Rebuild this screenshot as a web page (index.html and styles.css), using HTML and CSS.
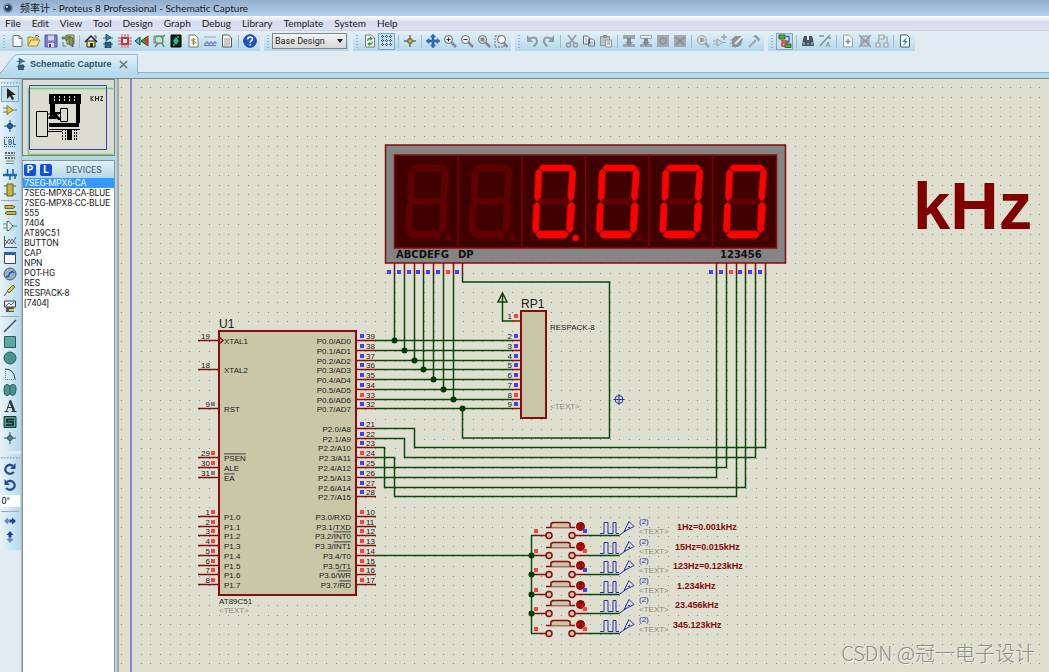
FILE: index.html
```html
<!DOCTYPE html>
<html lang="zh-CN">
<head>
    <meta charset="UTF-8">
    <meta name="viewport" content="width=device-width, initial-scale=1.0">
    <title>频率计 - Proteus 8 Professional - Schematic Capture</title>
    <link rel="stylesheet" href="styles.css">
</head>
<body>
    <!-- icon symbols -->
    <svg class="symbols" aria-hidden="true">
        <symbol id="i-new" viewBox="0 0 14 14"><path d="M3 1.5h6l3 3v8H3z" fill="#fff" stroke="#777"/><path d="M9 1.5v3h3" fill="none" stroke="#777"/></symbol>
        <symbol id="i-open" viewBox="0 0 14 14"><path d="M1 12V3h4l1 1h5v2" fill="#f5d36b" stroke="#a98a2a"/><path d="M1 12l3-6h9l-3 6z" fill="#fbe48f" stroke="#a98a2a"/><path d="M8 2q3-2 4 1" fill="none" stroke="#444"/></symbol>
        <symbol id="i-save" viewBox="0 0 14 14"><path d="M1 1h12v12H1z" fill="#7a7acb" stroke="#5656a0"/><path d="M4 1.500h6v5H4z" fill="#cfd2f2"/><path d="M4 9h6v4H4z" fill="#dfe0ee"/><path d="M5 10h2v3H5z" fill="#445"/></symbol>
        <symbol id="i-exit" viewBox="0 0 14 14"><path d="M6 1h7v9H6z" fill="#d9dd90" stroke="#6b6b2c"/><path d="M8 2l4 2v9l-4-3z" fill="#8f9450" stroke="#555"/><path d="M1 3h4V1l3 3-3 3V5H1z" fill="#7c9a40" stroke="#4b5b22" stroke-width=".6"/><path d="M2 8v4h3" fill="none" stroke="#777"/></symbol>
        <symbol id="i-home" viewBox="0 0 14 14"><path d="M3 7h8v6H3z" fill="#ffe84a" stroke="#222"/><path d="M1 8l6-6 6 6" fill="none" stroke="#222" stroke-width="1.500"/><path d="M10 2h2v3" fill="none" stroke="#a33"/><path d="M6 9h3v4H6z" fill="#222"/></symbol>
        <symbol id="i-sch" viewBox="0 0 14 14"><path d="M2 4h10M2 10h10" stroke="#456"/><path d="M5 0l5 3.500L5 7z" fill="#2a8cc8" stroke="#123" stroke-width=".7"/><path d="M4 8h2.500v6H4zM7.500 8H10v6H7.500z" fill="#23628c" stroke="#123" stroke-width=".5"/></symbol>
        <symbol id="i-pcb" viewBox="0 0 14 14"><path d="M4 0v14M7 0v14M10 0v14M0 4h14M0 7h14M0 10h14" stroke="#d8505a"/><path d="M3 3h8v8H3z" fill="#d32f39"/><path d="M5 5h4v4H5z" fill="#fff"/></symbol>
        <symbol id="i-3d" viewBox="0 0 14 14"><path d="M6 7l7-5v10z" fill="#2ba02b" stroke="#175c17"/><path d="M10 5l3-3v10l-3-3z" fill="#d33"/><path d="M0 7l5-4v8z" fill="#4cc3b4" stroke="#234"/></symbol>
        <symbol id="i-gerber" viewBox="0 0 14 14"><path d="M2 2h9v7H2z" fill="#cfe3d4" stroke="#5c8a6c"/><circle cx="7" cy="6" r="4" fill="none" stroke="#5c8a6c"/><path d="M3 13l3-4M10 9l2 4M9 4l4-3" stroke="#5c8a6c" stroke-width="1.500"/></symbol>
        <symbol id="i-design" viewBox="0 0 14 14"><path d="M2 1h10v12H2z" fill="#132018" stroke="#000"/><path d="M7 3l3 4-3 4-3-4z" fill="#19c49a"/><path d="M8 3h2M4 11h2" stroke="#7fe07f"/></symbol>
        <symbol id="i-bom" viewBox="0 0 14 14"><path d="M3 1h6l3 3v9H3z" fill="#fffdf0" stroke="#777"/><path d="M9.500 5.500q-4-1.500-4 .5 0 1 2 1.200t2 1.300q0 2-4 .5M7.500 4v7" fill="none" stroke="#a8882c"/></symbol>
        <symbol id="i-wave" viewBox="0 0 14 14"><path d="M1 3h12" stroke="#b9c4d6" stroke-width="2"/><path d="M1 10h2V8h2v2h2V8h2v2h2V8h2v2M1 11.500h12" fill="none" stroke="#6a6fc8"/></symbol>
        <symbol id="i-doc" viewBox="0 0 14 14"><path d="M2.500 1h6l3 3v9h-9z" fill="#fff" stroke="#555"/><path d="M4 5h6M4 7h6M4 9h6M4 11h6" stroke="#777" stroke-width=".8"/></symbol>
        <symbol id="i-help" viewBox="0 0 14 14"><circle cx="7" cy="7" r="6.300" fill="#2456c4" stroke="#163a8e"/><path d="M4.700 5.400q.1-2.300 2.400-2.300t2.300 2q0 1.200-1.300 1.900-1 .5-1 1.700M7.100 10v1.600" fill="none" stroke="#fff" stroke-width="1.500"/></symbol>
        <symbol id="i-refresh" viewBox="0 0 14 14"><path d="M2.500 1h6l3 3v9h-9z" fill="#fff" stroke="#777"/><path d="M4.500 7q0-3 4-2.500M9.500 7.500q0 3-4 2.500M7 3l2 1.500L7 6M7 8.500L5 10l2 1.500" fill="none" stroke="#2f9e2f" stroke-width="1.200"/></symbol>
        <symbol id="i-grid" viewBox="0 0 14 14"><path d="M1 2.500h12M1 6.500h12M1 10.500h12M2.500 1v12M6.500 1v12M10.500 1v12" stroke="#3f4f63" stroke-dasharray="1 1"/></symbol>
        <symbol id="i-origin" viewBox="0 0 14 14"><path d="M7 1v12M1 7h12" stroke="#333"/><path d="M5 5h4v4H5z" fill="#d4c22c" stroke="#675f14"/></symbol>
        <symbol id="i-pan" viewBox="0 0 14 14"><path d="M7 0l2.500 3H8v3h3V4.500L14 7l-3 2.500V8H8v3h1.500L7 14l-2.500-3H6V8H3v1.500L0 7l3-2.500V6h3V3H4.500z" fill="#2f6cc4" stroke="#1d4a90" stroke-width=".5"/></symbol>
        <symbol id="i-zin" viewBox="0 0 14 14"><path d="M8.500 8.500l4.500 4.500" stroke="#888" stroke-width="2.500"/><circle cx="5.500" cy="5.500" r="4" fill="#eef3f6" stroke="#666"/><path d="M3.500 5.500h4M5.500 3.500v4" stroke="#333"/></symbol>
        <symbol id="i-zout" viewBox="0 0 14 14"><path d="M8.500 8.500l4.500 4.500" stroke="#888" stroke-width="2.500"/><circle cx="5.500" cy="5.500" r="4" fill="#eef3f6" stroke="#666"/><path d="M3.500 5.500h4" stroke="#333"/></symbol>
        <symbol id="i-zall" viewBox="0 0 14 14"><path d="M8.500 8.500l4.500 4.500" stroke="#888" stroke-width="2.500"/><circle cx="5.500" cy="5.500" r="4" fill="#eef3f6" stroke="#666"/><path d="M3.500 3.500h4v4h-4z" fill="#888"/></symbol>
        <symbol id="i-zarea" viewBox="0 0 14 14"><path d="M1 2h9v11H1z" fill="none" stroke="#777" stroke-dasharray="2 1"/><path d="M10 9l3.500 4" stroke="#888" stroke-width="2.500"/><circle cx="7.500" cy="5.500" r="4" fill="#f4f8fb" stroke="#666"/></symbol>
        <symbol id="i-undo" viewBox="0 0 14 14"><path d="M4 5q8-4 8 2.500 0 2-3.500 5" fill="none" stroke="#8f9ba5" stroke-width="2"/><path d="M2 1v7h6z" fill="#8f9ba5"/></symbol>
        <symbol id="i-redo" viewBox="0 0 14 14"><path d="M10 5Q2 1 2 7.500q0 2 3.500 5" fill="none" stroke="#8f9ba5" stroke-width="2"/><path d="M12 1v7H6z" fill="#8f9ba5"/></symbol>
        <symbol id="i-cut" viewBox="0 0 14 14"><path d="M3 1l6.500 8.500M11 1L4.500 9.500" stroke="#909aa2" stroke-width="1.600"/><circle cx="3.500" cy="11" r="2" fill="none" stroke="#909aa2" stroke-width="1.500"/><circle cx="10.500" cy="11" r="2" fill="none" stroke="#909aa2" stroke-width="1.500"/></symbol>
        <symbol id="i-copy" viewBox="0 0 14 14"><path d="M1.500 2h4l2 2v6h-6zM6.500 5h4l2 2v5h-6z" fill="#fff" stroke="#5a6880"/><path d="M3 5h2M3 7h2M8 8h3M8 10h3" stroke="#5a6880" stroke-width=".8"/></symbol>
        <symbol id="i-paste" viewBox="0 0 14 14"><path d="M1.500 2.500h9v9h-9z" fill="#bcc3c8" stroke="#8d969d"/><path d="M4 1h4v3H4z" fill="#8d969d"/><path d="M6.500 6h6v7h-6z" fill="#e8eef1" stroke="#8d969d"/><path d="M8 8h3M8 10h3" stroke="#8d969d"/></symbol>
        <symbol id="i-bcopy" viewBox="0 0 14 14"><path d="M1 1h12v4H1zM1 10h12v3H1z" fill="#9da7ae"/><path d="M5 4h4v4h2l-4 4-4-4h2z" fill="#828c94"/></symbol>
        <symbol id="i-bmove" viewBox="0 0 14 14"><path d="M1.500 1.500h11v3h-11z" fill="#e2ecf1" stroke="#9da7ae"/><path d="M1 10h12v3H1z" fill="#9da7ae"/><path d="M5 4h4v4h2l-4 4-4-4h2z" fill="#828c94"/></symbol>
        <symbol id="i-brot" viewBox="0 0 14 14"><path d="M1 1h12v12H1z" fill="#a2aab0"/><circle cx="7" cy="7" r="3" fill="none" stroke="#8b949b" stroke-width="1.500"/></symbol>
        <symbol id="i-bdel" viewBox="0 0 14 14"><path d="M1 1h12v12H1z" fill="#a2aab0"/><path d="M3 3l8 8M11 3l-8 8" stroke="#80898f" stroke-width="1.200"/></symbol>
        <symbol id="i-pick" viewBox="0 0 14 14"><circle cx="6" cy="6" r="4.500" fill="#d6dde1" stroke="#9aa3a9"/><path d="M9 9l4 4" stroke="#9aa3a9" stroke-width="2.500"/><path d="M4 4h3l2 2-2 2H4z" fill="#9aa3a9"/></symbol>
        <symbol id="i-make" viewBox="0 0 14 14"><path d="M4 5l6 3.500L4 12zM0 7h4M0 10h4M10 8.500h3" fill="#cfd7db" stroke="#9ea7ad"/><path d="M11 0v6M8 3h6" stroke="#9ea7ad" stroke-width="1.500"/></symbol>
        <symbol id="i-pack" viewBox="0 0 14 14"><path d="M2 5l3-3h6l2 3-2 6-3 2H2z" fill="#8c9499"/><path d="M5 10l7-7" stroke="#dfe7eb" stroke-width="2"/><path d="M0 6h3M0 9h3M5 12v2" stroke="#8c9499"/></symbol>
        <symbol id="i-hammer" viewBox="0 0 14 14"><path d="M2 13l7-7" stroke="#9aa3a9" stroke-width="2"/><path d="M6 2l3-1 4 4-1 3-2-3z" fill="#8c9499"/></symbol>
        <symbol id="i-auto" viewBox="0 0 14 14"><path d="M1 1h6v4H1zM7 10h6v3.500H7z" fill="#4fae2e" stroke="#2c6b18"/><path d="M4 6v1h5v2H4v3h3" fill="none" stroke="#d3392f" stroke-width="1.500"/><path d="M8 2.500h3v5.500h-3" fill="none" stroke="#3c66b4" stroke-width="1.300"/></symbol>
        <symbol id="i-find" viewBox="0 0 14 14"><path d="M3 2h3v5l1 5H1l1-7zM8 2h3l1 3 1 7H7l1-5z" fill="#4a545c"/><path d="M5 6h4v3H5z" fill="#4a545c"/><path d="M3 8v3M11 8v3" stroke="#b9c8d2"/></symbol>
        <symbol id="i-prop" viewBox="0 0 14 14"><path d="M1 2h5M2 12l7-8M9 4l3-3M9 4h4" stroke="#8b949b" stroke-width="1.600"/><path d="M8 13l2-5 2 5M9 11h2" fill="none" stroke="#8b949b"/></symbol>
        <symbol id="i-newsheet" viewBox="0 0 14 14"><path d="M2.500 1h6l3 3v9h-9z" fill="#eef3f6" stroke="#9ba4ab"/><path d="M7 5v5M4.500 7.500h5" stroke="#8b949b" stroke-width="1.500"/></symbol>
        <symbol id="i-delsheet" viewBox="0 0 14 14"><path d="M3 2h8v10H3z" fill="#c3cbd0" stroke="#8f989f"/><path d="M1 1l12 12M13 1L1 13M3 7h8" stroke="#8f989f" stroke-width="1.200"/></symbol>
        <symbol id="i-goto" viewBox="0 0 14 14"><path d="M4 1h5v4H4zM1 9h4v4H1zM9 9h4v4H9zM4 5l-1 4M9 3h3v6" fill="#dfe7eb" stroke="#9ba4ab" stroke-width="1.200"/></symbol>
        <symbol id="i-erc" viewBox="0 0 14 14"><path d="M2.500 1h6.500l2.500 2.500V13h-9z" fill="#fff" stroke="#4c5b68"/><path d="M9 3L4 8h3l-2 4 5-5H7.500z" fill="#2b87d0"/></symbol>
        <symbol id="i-sel" viewBox="0 0 14 14"><path d="M4 1v11l3-3 2 4 2-1-2-4h4z" fill="#222"/></symbol>
        <symbol id="i-comp" viewBox="0 0 14 14"><path d="M0 5h4M0 9h4M9 7h5" stroke="#777"/><path d="M4 2.500l6 4.500-6 4.500z" fill="#e2c73c" stroke="#8c7a1c"/></symbol>
        <symbol id="i-junc" viewBox="0 0 14 14"><path d="M7 1v12M1 7h12" stroke="#345"/><circle cx="7" cy="7" r="2.600" fill="#1c62b4" stroke="#123c74"/></symbol>
        <symbol id="i-lbl" viewBox="0 0 14 14"><path d="M1 2.500h12M1 11.500h12" stroke="#555" stroke-dasharray="1 1"/><path d="M1.500 4v5.500H4M6 4.500h2q1 1 0 2 1.500 1.500 0 3H6zM6 6.800h2M10.500 4v5.500H13" fill="none" stroke="#2a62b4"/></symbol>
        <symbol id="i-script" viewBox="0 0 14 14"><path d="M2 2h10M2 7h10" stroke="#666" stroke-width="2" stroke-dasharray="2 1"/><path d="M2 4.500h10M3 10h8M3 12.500h8" stroke="#888"/></symbol>
        <symbol id="i-bus" viewBox="0 0 14 14"><path d="M0 8h14" stroke="#1d6fb8" stroke-width="2.500"/><path d="M4.500 2v7M10 2v5M7 8v5M12 8v4" stroke="#1d5c9c" stroke-width="1.500"/></symbol>
        <symbol id="i-sub" viewBox="0 0 14 14"><path d="M1 3h3M1 11h3M10 3h3M10 11h3" stroke="#555"/><path d="M4 1h6v12H4z" fill="#c8b43a" stroke="#6d6115"/></symbol>
        <symbol id="i-term" viewBox="0 0 14 14"><path d="M2 2.500h8l2 1.500-2 1.500H2zM4 8.500h9v3H4l-2-1.500z" fill="#c8b43a" stroke="#6d6115"/></symbol>
        <symbol id="i-pin" viewBox="0 0 14 14"><path d="M0 5h3M0 9h3M10 7h4" stroke="#2c9a90"/><path d="M4 2.500h2l4 4.500-4 4.500H4z" fill="#e8f3f8" stroke="#555"/></symbol>
        <symbol id="i-graph" viewBox="0 0 14 14"><path d="M1.500 1v11.500H14" fill="none" stroke="#555"/><path d="M2 10l4-6 3 5 4-7" fill="none" stroke="#2a6ec0"/><path d="M2 5l4 4 3-5 4 5" fill="none" stroke="#c84848"/></symbol>
        <symbol id="i-tape" viewBox="0 0 14 14"><path d="M1.500 1.500h11v11h-11z" fill="#fff" stroke="#444"/><path d="M1 1h12v3H1z" fill="#2c5fae"/></symbol>
        <symbol id="i-gen" viewBox="0 0 14 14"><circle cx="7" cy="7" r="6" fill="#9ab0c0" stroke="#556"/><path d="M3 9q2 2 3-1t2-2.500q2-2 3 .5" fill="none" stroke="#1c55c0" stroke-width="1.500"/></symbol>
        <symbol id="i-probe" viewBox="0 0 14 14"><path d="M1 13l4-5" stroke="#555"/><path d="M4 8l6-6 2 2-6 6z" fill="#d8c44a" stroke="#7b6d20"/></symbol>
        <symbol id="i-inst" viewBox="0 0 14 14"><path d="M1.500 2h11v6h-11z" fill="#eef" stroke="#444"/><path d="M3 7l3-3 2 2 3-3" fill="none" stroke="#2a6ec0"/><path d="M3 8h8v5H3z" fill="#555"/><path d="M6 10h5v2H6z" fill="#d8c44a"/></symbol>
        <symbol id="i-line" viewBox="0 0 14 14"><path d="M1 13L13 1" stroke="#444" stroke-width="1.300"/></symbol>
        <symbol id="i-box" viewBox="0 0 14 14"><path d="M1.500 1.500h11v11h-11z" fill="#5aa8a4" stroke="#2d5c5a"/></symbol>
        <symbol id="i-circ" viewBox="0 0 14 14"><circle cx="7" cy="7" r="6" fill="#4b9490" stroke="#2d5c5a"/></symbol>
        <symbol id="i-arc" viewBox="0 0 14 14"><path d="M2.500 2v10.500H13" fill="none" stroke="#3c7ac0" stroke-dasharray="1 1"/><path d="M2 2q9 0 10 10" fill="none" stroke="#444"/></symbol>
        <symbol id="i-path" viewBox="0 0 14 14"><path d="M4 1.500q2 0 3 2 1-2 3-2 3.500 0 3 5.500t-3 5.500q-2 0-3-2-1 2-3 2Q1 12.500 1 7t3-5.500z" fill="#4b9490" stroke="#2d5c5a"/><path d="M7 3v8" stroke="#2d5c5a"/></symbol>
        <symbol id="i-text" viewBox="0 0 14 14"><path d="M7 2L3.500 12" fill="none" stroke="#333" stroke-width="1"/><path d="M7 1.500l4 10.500" fill="none" stroke="#333" stroke-width="2.400"/><path d="M4.500 8.500h5M1.500 12.500h4M8.500 12.500h5" stroke="#333"/></symbol>
        <symbol id="i-symb" viewBox="0 0 14 14"><path d="M1 1.500h12v11H1z" fill="#4b9490" stroke="#1c3a38"/><path d="M11 4.500H4v2.500h6v3H3" fill="none" stroke="#142624" stroke-width="1.600"/></symbol>
        <symbol id="i-mark" viewBox="0 0 14 14"><path d="M7 1v12M1 7h12" stroke="#444"/><circle cx="7" cy="7" r="2.400" fill="#3f9a92" stroke="#1c4a46"/></symbol>
        <symbol id="i-cw" viewBox="0 0 14 14"><path d="M11 10q-3 3-6.500 1T3 5q3-4 7-1" fill="none" stroke="#2a4a96" stroke-width="2.200"/><path d="M12.500 1v6H7z" fill="#2a4a96"/></symbol>
        <symbol id="i-ccw" viewBox="0 0 14 14"><path d="M3 10q3 3 6.500 1T11 5Q8 1 4 4" fill="none" stroke="#2a4a96" stroke-width="2.200"/><path d="M1.500 1v6H7z" fill="#2a4a96"/></symbol>
        <symbol id="i-fliph" viewBox="0 0 14 14"><path d="M1 7l4-3.500v2h2v3H5v2z" fill="#6a86cc"/><path d="M13 7L9 3.500v2H7v3h2v2z" fill="#24428e"/></symbol>
        <symbol id="i-flipv" viewBox="0 0 14 14"><path d="M7 1l3.500 4h-2v2h-3V5h-2z" fill="#24428e"/><path d="M7 13l3.500-4h-2V7h-3v2h-2z" fill="#6a86cc"/></symbol>
    </svg>

    <header class="titlebar">
        <svg class="logo" viewBox="0 0 12 12"><circle cx="6" cy="6" r="5" fill="#7288a6"/><circle cx="6" cy="6" r="3" fill="#1c3558"/><circle cx="5" cy="5" r="1" fill="#d8e4f2"/></svg>
        <span>频率计 - Proteus 8 Professional - Schematic Capture</span>
    </header>

    <nav class="menubar">
        <a href="#">File</a>
        <a href="#">Edit</a>
        <a href="#">View</a>
        <a href="#">Tool</a>
        <a href="#">Design</a>
        <a href="#">Graph</a>
        <a href="#">Debug</a>
        <a href="#">Library</a>
        <a href="#">Template</a>
        <a href="#">System</a>
        <a href="#">Help</a>
    </nav>

    <div class="toolbars">
        <div class="toolbar">
            <i class="grip"></i>
            <button title="New"><svg><use href="#i-new"/></svg></button>
            <button title="Open"><svg><use href="#i-open"/></svg></button>
            <button title="Save"><svg><use href="#i-save"/></svg></button>
            <button title="Close"><svg><use href="#i-exit"/></svg></button>
            <i class="sep"></i>
            <button title="Home"><svg><use href="#i-home"/></svg></button>
            <button title="Schematic"><svg><use href="#i-sch"/></svg></button>
            <button title="PCB"><svg><use href="#i-pcb"/></svg></button>
            <button title="3D"><svg><use href="#i-3d"/></svg></button>
            <button title="Gerber"><svg><use href="#i-gerber"/></svg></button>
            <button title="Explorer"><svg><use href="#i-design"/></svg></button>
            <button title="Bill of Materials"><svg><use href="#i-bom"/></svg></button>
            <button title="Source"><svg><use href="#i-wave"/></svg></button>
            <button title="Notes"><svg><use href="#i-doc"/></svg></button>
            <i class="sep"></i>
            <button title="Help"><svg><use href="#i-help"/></svg></button>
        </div>
        <div class="toolbar">
            <i class="grip"></i>
            <div class="variant">
                <select aria-label="Design variant">
                    <option>Base Design</option>
                </select>
            </div>
        </div>
        <div class="toolbar">
            <i class="grip"></i>
            <button title="Redraw"><svg><use href="#i-refresh"/></svg></button>
            <button title="Grid" class="on"><svg><use href="#i-grid"/></svg></button>
            <i class="sep"></i>
            <button title="Origin"><svg><use href="#i-origin"/></svg></button>
            <i class="sep"></i>
            <button title="Pan"><svg><use href="#i-pan"/></svg></button>
            <button title="Zoom In"><svg><use href="#i-zin"/></svg></button>
            <button title="Zoom Out"><svg><use href="#i-zout"/></svg></button>
            <button title="Zoom All"><svg><use href="#i-zall"/></svg></button>
            <button title="Zoom Area"><svg><use href="#i-zarea"/></svg></button>
        </div>
        <div class="toolbar">
            <i class="grip"></i>
            <button title="Undo"><svg><use href="#i-undo"/></svg></button>
            <button title="Redo"><svg><use href="#i-redo"/></svg></button>
            <i class="sep"></i>
            <button title="Cut"><svg><use href="#i-cut"/></svg></button>
            <button title="Copy"><svg><use href="#i-copy"/></svg></button>
            <button title="Paste"><svg><use href="#i-paste"/></svg></button>
            <i class="sep"></i>
            <button title="Block Copy"><svg><use href="#i-bcopy"/></svg></button>
            <button title="Block Move"><svg><use href="#i-bmove"/></svg></button>
            <button title="Block Rotate"><svg><use href="#i-brot"/></svg></button>
            <button title="Block Delete"><svg><use href="#i-bdel"/></svg></button>
            <i class="sep"></i>
            <button title="Pick"><svg><use href="#i-pick"/></svg></button>
            <button title="Make Device"><svg><use href="#i-make"/></svg></button>
            <button title="Packaging"><svg><use href="#i-pack"/></svg></button>
            <button title="Decompose"><svg><use href="#i-hammer"/></svg></button>
        </div>
        <div class="toolbar">
            <i class="grip"></i>
            <button title="Autorouter" class="on"><svg><use href="#i-auto"/></svg></button>
            <i class="sep"></i>
            <button title="Search"><svg><use href="#i-find"/></svg></button>
            <button title="Property Assignment"><svg><use href="#i-prop"/></svg></button>
            <i class="sep"></i>
            <button title="New Sheet"><svg><use href="#i-newsheet"/></svg></button>
            <button title="Remove Sheet"><svg><use href="#i-delsheet"/></svg></button>
            <button title="Goto Sheet"><svg><use href="#i-goto"/></svg></button>
            <i class="sep"></i>
            <button title="Electrical Check"><svg><use href="#i-erc"/></svg></button>
        </div>
    </div>

    <div class="tabs">
        <div class="tab">
            <svg class="tab-shape" viewBox="0 0 138 20" preserveAspectRatio="none">
                <defs><linearGradient id="tabfill" x2="0" y2="1"><stop offset="0" stop-color="#e4f2f9"/><stop offset="1" stop-color="#b4daec"/></linearGradient></defs>
                <path d="M0 20L13 3Q15 .5 18 .5H137.500V20" fill="url(#tabfill)" stroke="#8ab6d0"/>
            </svg>
            <svg class="tab-icon"><use href="#i-sch"/></svg>
            <span>Schematic Capture</span>
            <button title="Close tab"><svg viewBox="0 0 10 10"><path d="M1 1l8 8M9 1L1 9" stroke="#6a6a6a" stroke-width="1.500"/></svg></button>
        </div>
    </div>

    <main class="workspace">
        <aside class="modes">
            <div class="modebar">
                <i class="hgrip"></i>
                <button title="Selection" class="on"><svg><use href="#i-sel"/></svg></button>
                <button title="Component"><svg><use href="#i-comp"/></svg></button>
                <button title="Junction"><svg><use href="#i-junc"/></svg></button>
                <button title="Wire Label"><svg><use href="#i-lbl"/></svg></button>
                <button title="Text Script"><svg><use href="#i-script"/></svg></button>
                <button title="Bus"><svg><use href="#i-bus"/></svg></button>
                <button title="Subcircuit"><svg><use href="#i-sub"/></svg></button>
                <i class="hsep"></i>
                <button title="Terminals"><svg><use href="#i-term"/></svg></button>
                <button title="Device Pins"><svg><use href="#i-pin"/></svg></button>
                <button title="Graph"><svg><use href="#i-graph"/></svg></button>
                <button title="Active Popup"><svg><use href="#i-tape"/></svg></button>
                <button title="Generator"><svg><use href="#i-gen"/></svg></button>
                <button title="Probe"><svg><use href="#i-probe"/></svg></button>
                <button title="Instruments"><svg><use href="#i-inst"/></svg></button>
                <i class="hsep"></i>
                <button title="2D Line"><svg><use href="#i-line"/></svg></button>
                <button title="2D Box"><svg><use href="#i-box"/></svg></button>
                <button title="2D Circle"><svg><use href="#i-circ"/></svg></button>
                <button title="2D Arc"><svg><use href="#i-arc"/></svg></button>
                <button title="2D Path"><svg><use href="#i-path"/></svg></button>
                <button title="2D Text"><svg><use href="#i-text"/></svg></button>
                <button title="2D Symbol"><svg><use href="#i-symb"/></svg></button>
                <button title="2D Marker"><svg><use href="#i-mark"/></svg></button>
            </div>
            <div class="modebar">
                <i class="hgrip"></i>
                <button title="Rotate Clockwise"><svg><use href="#i-cw"/></svg></button>
                <button title="Rotate Anti-clockwise"><svg><use href="#i-ccw"/></svg></button>
                <input type="text" class="angle" value="0°" aria-label="Angle">
                <i class="hsep"></i>
                <button title="Mirror X"><svg><use href="#i-fliph"/></svg></button>
                <button title="Mirror Y"><svg><use href="#i-flipv"/></svg></button>
            </div>
        </aside>

        <aside class="side">
            <div class="overview">
                <svg width="90" height="75">
                    <path d="M90 8.500H5.500v66H90" fill="none" stroke="#6fd06f" stroke-width="1.500"/>
                    <path d="M6.500 5.500h77v64h-77z" fill="none" stroke="#3c3cc0"/>
                    <path d="M26 14h32v10H26z"/>
                    <path d="M31.500 16v6M36.500 16v6M41.500 16v6M46.500 16v6M51.500 16v6" stroke="#dcddd0" stroke-dasharray="2 1"/>
                    <path d="M27 24h5v8h6v2h-5v5h-7v-3h1zM53 24h4v19h-4zM26 43h30v4H26zM33 33l5 7h-3l-4-5z"/>
                    <path d="M13.500 31.500h11v25h-11zM37.500 28.500h7v13h-7zM24 34h12M24 38h14M24 51.500h15M26 49.500h31" fill="none" stroke="#000"/>
                    <path d="M44 49h5v11h-5z"/>
                    <path d="M39.500 49v11M42.500 49v11M51.500 49v11M53.500 49v11" stroke="#000" stroke-dasharray="2 1"/>
                    <path d="M68 16v5M70.500 16l-2 2.500 2 2.500M72.500 16v5M75.500 16v5M72.500 18.500h3M77.500 16.500h2l-2 4h2.500" fill="none" stroke="#222"/>
                </svg>
            </div>
            <section class="devices">
                <div class="devices-head">
                    <button title="Pick Devices">P</button>
                    <button title="Libraries">L</button>
                    <h2>DEVICES</h2>
                </div>
                <ul role="listbox" aria-label="Devices">
                    <li class="selected">7SEG-MPX6-CA</li>
                    <li>7SEG-MPX8-CA-BLUE</li>
                    <li>7SEG-MPX8-CC-BLUE</li>
                    <li>555</li>
                    <li>7404</li>
                    <li>AT89C51</li>
                    <li>BUTTON</li>
                    <li>CAP</li>
                    <li>NPN</li>
                    <li>POT-HG</li>
                    <li>RES</li>
                    <li>RESPACK-8</li>
                    <li>[7404]</li>
                </ul>
            </section>
        </aside>

        <div class="canvas">
            <svg id="schematic"></svg>
            <div class="watermark">CSDN @冠一电子设计</div>
        </div>
    </main>

    <script>
        // drawing origin is the window corner, the sheet starts at 119,79
        const PITCH = 9.77;
        const row = k => Math.round(340 + PITCH * k) + 0.5;
        let out = '';

        function line(cls, d) {
            out += `<path class="${cls}" d="${d}"/>`;
        }
        function text(cls, x, y, s) {
            out += `<text class="${cls}" x="${x}" y="${y}">${s}</text>`;
        }
        function level(x, y, c) {
            if (c) out += `<rect class="lv-${c}" x="${x}" y="${y}" width="4" height="4"/>`;
        }
        function dot(x, y) {
            out += `<circle class="node" cx="${x}" cy="${y}" r="3"/>`;
        }
        function over(s) {
            return `<tspan class="over">${s}</tspan>`;
        }

        // grid
        let grid = '';
        for (let i = 0; i < 210; i++) {
            for (let j = 0; j < 110; j++) {
                if (i === 1) continue;
                grid += `M${Math.round(121 + PITCH * i)} ${Math.round(87 + PITCH * j)}h1v1h-1z`;
            }
        }
        line('grid', grid);
        line('border', 'M131 79V1200');

        // U1
        out += '<rect class="body" x="219" y="331" width="137" height="264"/>';
        text('ref', 219, 328, 'U1');
        text('t', 219, 604, 'AT89C51');
        text('t dim', 219, 613, '&lt;TEXT&gt;');
        line('pin', 'M219 337l4 3.500-4 3.500');

        const left = [
            [0, 19, 'XTAL1', ''], [3, 18, 'XTAL2', ''], [7, 9, 'RST', 'g'],
            [12, 29, over('PSEN'), 'r'], [13, 30, 'ALE', 'r'], [14, 31, over('EA'), 'g']
        ];
        for (let i = 0; i < 8; i++) left.push([18 + i, i + 1, 'P1.' + i, 'r']);
        for (const [k, num, name, c] of left) {
            const y = row(k);
            line('pin', `M198 ${y}H219`);
            text('t end', 210, y - 1.5, num);
            text('t', 224, y + 3, name);
            level(211, y - 6.5, c);
        }

        const p3 = ['RXD', 'TXD', over('INT0'), over('INT1'), 'T0', over('T1'), over('WR'), over('RD')];
        for (let i = 0; i < 8; i++) {
            const pins = [
                [i, 39 - i, `P0.${i}/AD${i}`, i === 6 ? 'r' : 'b'],
                [i + 9, 21 + i, `P2.${i}/A${i + 8}`, i === 3 ? 'r' : 'b'],
                [i + 18, 10 + i, `P3.${i}/${i === 5 ? 'T1' : p3[i]}`, 'r']
            ];
            for (const [k, num, name, c] of pins) {
                const y = row(k);
                line('pin', `M356 ${y}H376`);
                text('t', 366, y - 1.5, num);
                text('t end', 351, y + 3, name);
                level(360, y - 6.5, c);
            }
        }

        // RP1
        for (let i = 0; i < 8; i++) {
            const y = row(i);
            line('wire', `M376 ${y}H512`);
            line('pin', `M512 ${y}H521`);
            text('t end', 512, y - 1.5, i + 2);
            level(514, y - 6.5, i === 6 ? 'r' : 'b');
        }
        line('wire', 'M502.500 302V321H512M502.500 293l4.500 9h-9zM502.500 293v9');
        line('pin', 'M512 321H521');
        text('t end', 512, 319, 1);
        level(514, 314, 'r');
        out += '<rect class="body" x="521" y="311" width="25" height="107"/>';
        text('ref', 521, 308, 'RP1');
        text('t', 550, 330, 'RESPACK-8');
        text('t dim', 550, 409, '&lt;TEXT&gt;');

        // display
        out += '<rect class="case" x="385.500" y="145" width="400" height="118"/>';
        out += '<rect class="glass" x="394.500" y="155" width="382" height="93"/>';
        const segs = [
            '17,13 20,10 49,10 52,13 48,16 21,16',
            '52,14 54,17 52,43 49,46 46,42 48,17',
            '50,47 53,50 51,75 48,78 45,75 46,50',
            '14,80 17,76 43,76 47,79 44,83 17,83',
            '15,47 18,50 17,75 13,78 11,75 12,50',
            '17,14 20,17 19,42 15,46 13,43 14,17',
            '15,46 18,43 47,43 50,46 47,49 18,49'
        ];
        for (let n = 0; n < 6; n++) {
            const x = 394.5 + 63.6 * n;
            out += `<g transform="translate(${x} 155)">`;
            if (n) line('divider', 'M0 0V93');
            // the middle bar goes under the lit ones
            for (let s = 6; s >= 0; s--) {
                out += `<polygon class="${n > 1 && s < 6 ? 'lit' : 'unlit'}" points="${segs[s]}"/>`;
            }
            out += `<circle class="${n === 2 ? 'lit' : 'unlit'}" cx="54" cy="83" r="3"/></g>`;
        }
        text('seg', 396, 258, 'ABCDEFG');
        text('seg', 458, 258, 'DP');
        text('seg', 720, 258, '123456');

        for (let i = 0; i < 8; i++) {
            const x = Math.round(394 + PITCH * i) + 0.5;
            line('pin', `M${x} 263V274`);
            level(x - 7.5, 270, i === 6 ? 'r' : 'b');
            if (i < 7) line('wire', `M${x} 274V${row(i)}`);
            dot(x, row(i));
        }
        line('wire', `M462.500 274V282H609.500V438H462.500V${row(7)}`);

        // digit select wires: pin row, column to turn down at, row to leave on
        const select = [
            [14, 0, 14], [13, 0, 13], [12, 394.5, 16],
            [11, 384.5, 15], [10, 404.5, 12], [9, 414.5, 11]
        ];
        select.forEach(([k, turn, leave], i) => {
            const x = Math.round(716 + PITCH * i) + 0.5;
            line('pin', `M${x} 263V274`);
            level(x - 7.5, 270, i === 2 ? 'r' : 'b');
            line('wire', `M376 ${row(k)}` + (turn ? `H${turn}V${row(leave)}` : '') + `H${x}V274`);
        });

        // buttons and generators
        const inputs = [
            ['1Hz=0.001kHz', 677, 'b'], ['15Hz=0.015kHz', 675, 'r'], ['123Hz=0.123kHz', 673, 'b'],
            ['1.234kHz', 677, 'b'], ['23.456kHz', 675, 'r'], ['345.123kHz', 673, 'r']
        ];
        line('wire', `M376 ${row(22)}H531.500M531.500 535.500V633.500`);
        inputs.forEach(([label, x, c], i) => {
            const y = Math.round(535 + 19.6 * i) + 0.5;
            if (i && i < 5) dot(531.5, y);
            line('wire', `M531 ${y}h6M585 ${y}H619`);
            line('pin', `M537 ${y}h9M575 ${y}h10M546 ${y - 8}h29`);
            line('cap', `M551 ${y - 8}v-4l2-1h15l2 1v4`);
            out += `<circle class="ring" cx="549" cy="${y}" r="3"/><circle class="ring" cx="572" cy="${y}" r="3"/>`;
            out += `<circle class="ball" cx="580.500" cy="${y - 9}" r="4"/>`;
            line('mark', `M579 ${y - 11}l3 2-3 2M581 ${y - 12}v6`);
            level(534, y - 6.5, 'r');
            level(583, y - 6.5, c);
            line('gen thin', `M600 ${y - 2}h4v-11h4v11h5v-11h3v11h3`);
            line('gen thin', `M619 ${y}l7-5M634 ${y - 9}l-5-5-5 10zM628 ${y - 8}h2`);
            text('t blue', 639, y - 11.5, '(2)');
            text('t dim', 639, y - 1.5, '&lt;TEXT&gt;');
            text('freq', x, y - 5.5, label);
        });

        // origin marker
        line('gen thin', 'M613.500 399.500h11M619 394v11M615 399.500a4 4 0 1 0 8 0a4 4 0 1 0-8 0');
        text('unit', 913, 229, 'kHz');

        document.getElementById('schematic').innerHTML = `<g transform="translate(-119 -79)">${out}</g>`;
    </script>
</body>
</html>
```

FILE: styles.css
```css
* {
    box-sizing: border-box;
}

body {
    margin: 0;
    height: 100vh;
    display: flex;
    flex-direction: column;
    overflow: hidden;
    background-color: #e3ebf2;
    font-family: Lato, "Noto Sans CJK SC", sans-serif;
    font-size: 10px;
    color: #1c1c1c;
}

.symbols {
    display: none;
}

button {
    padding: 0;
    border: 1px solid transparent;
    background: none;
    display: flex;
    align-items: center;
    justify-content: center;
}

button.on {
    border-color: #7fa9c4;
    background-color: #c4e0ef;
}

/* title and menu */
.titlebar {
    display: flex;
    align-items: center;
    gap: 6px;
    height: 16px;
    flex: none;
    padding-left: 2px;
    line-height: 14px;
    background: linear-gradient(#93aecb, #b4cfea);
}

.logo {
    width: 12px;
    height: 12px;
}

.menubar {
    display: flex;
    gap: 11px;
    height: 15px;
    flex: none;
    padding-left: 5px;
    line-height: 15px;
    background: linear-gradient(#ffffff, #d8dcef 40%, #dde1f3);
    border-bottom: 1px solid #cfd3e0;
}

.menubar a {
    color: #1c1c1c;
    text-decoration: none;
}

/* toolbars */
.toolbars {
    display: flex;
    gap: 4px;
    height: 21px;
    flex: none;
}

.toolbar {
    display: flex;
    align-items: center;
    height: 20px;
    padding-right: 2px;
    background: linear-gradient(#e2f1f8, #b3d8ea);
}

.toolbar button {
    width: 17px;
    height: 17px;
}

.toolbar button svg,
.modebar button svg {
    width: 14px;
    height: 14px;
    flex: none;
}

.grip {
    width: 8px;
    height: 15px;
    background: radial-gradient(circle, #9fb6c6 1px, transparent 1px) 0 0 / 8px 3px;
}

.sep {
    width: 6px;
    height: 13px;
    background: linear-gradient(#a9b8c2, #a9b8c2) center / 1px 100% no-repeat;
}

.variant {
    position: relative;
}

.variant select {
    display: block;
    width: 75px;
    height: 16px;
    padding: 0 2px;
    border: 1px solid #7c8790;
    border-radius: 0;
    appearance: none;
    background: linear-gradient(#f4f4f4, #d6d6d6);
    font-family: Roboto, sans-serif;
    font-size: 9px;
    color: #1c1c1c;
}

.variant::after {
    content: "";
    position: absolute;
    right: 4px;
    top: 6px;
    border: 3px solid transparent;
    border-top: 4px solid #222;
    border-bottom: 0;
    pointer-events: none;
}

/* tabs */
.tabs {
    display: flex;
    height: 27px;
    flex: none;
    padding-top: 2px;
    border-bottom: 1px solid #7e8282;
    box-shadow: inset 0 -5px 0 #b4daeb, inset 0 -6px 0 #8ab6d0;
}

.tab {
    position: relative;
    display: flex;
    align-items: center;
    gap: 3px;
    width: 138px;
    height: 20px;
    padding-left: 15px;
    font-family: "Liberation Sans", Arial, sans-serif;
    font-size: 9px;
    font-weight: bold;
    color: #2d5170;
}

.tab-shape {
    position: absolute;
    inset: 0;
    width: 100%;
    height: 100%;
}

.tab-icon {
    position: relative;
    width: 12px;
    height: 12px;
}

.tab span,
.tab button {
    position: relative;
}

.tab button {
    margin-left: 3px;
}

.tab button svg {
    width: 9px;
    height: 9px;
}

/* work area */
.workspace {
    flex: 1;
    min-height: 0;
    display: flex;
    background-color: #b4d6e6;
}

.modes {
    width: 22px;
    display: flex;
    flex-direction: column;
    gap: 3px;
    background-color: #e3ebf2;
    border-right: 1px solid #a8b6c0;
}

.modebar {
    display: flex;
    flex-direction: column;
    align-items: center;
    padding: 0 1px 5px 0;
    background: linear-gradient(to right, #e6f3fa, #b4d9ec);
}

.modebar button {
    width: 18px;
    height: 16px;
}

.hgrip {
    width: 20px;
    height: 7px;
    background: radial-gradient(circle, #9fb6c6 1px, transparent 1px) 0 0 / 3px 7px;
}

.hsep {
    width: 18px;
    height: 4px;
    background: linear-gradient(#9fa9b0, #9fa9b0) center / 100% 1px no-repeat;
}

.angle {
    width: 19px;
    height: 12px;
    margin: 2px 0;
    padding: 0 1px;
    border: 0;
    background-color: #fff;
    font-family: Roboto, sans-serif;
    font-size: 9px;
}

.side {
    width: 93px;
    display: flex;
    flex-direction: column;
    gap: 4px;
}

.overview {
    height: 77px;
    background-color: #dcddd0;
    border: 1px solid #7e8282;
    overflow: hidden;
}

.overview svg {
    display: block;
}

.devices {
    flex: 1;
    background-color: #fff;
    border: 1px solid #8d9499;
    border-bottom: 0;
    font-family: Roboto, "Liberation Sans", sans-serif;
    font-size: 9px;
}

.devices-head {
    display: flex;
    align-items: center;
    gap: 4px;
    height: 17px;
    padding-left: 1px;
    background: linear-gradient(#e2f1f8, #b3d8ea);
}

.devices-head button {
    width: 12px;
    height: 12px;
    border: 0;
    border-radius: 2px;
    background-color: #1450d8;
    color: #fff;
    font-family: Roboto, sans-serif;
    font-size: 10px;
    font-weight: bold;
    line-height: 12px;
}

.devices-head h2 {
    margin: 0 0 0 10px;
    font-size: 9px;
    font-weight: normal;
    color: #4c5a62;
}

.devices ul {
    margin: 0;
    padding: 0;
    list-style: none;
}

.devices li {
    height: 10px;
    padding-left: 1px;
    line-height: 10px;
    white-space: nowrap;
}

.devices .selected {
    background-color: #3399ff;
    color: #fff;
}

.canvas {
    position: relative;
    flex: 1;
    min-width: 0;
    margin-left: 2px;
    border-left: 2px solid #a9a9a4;
    background-color: #dedfcf;
    overflow: hidden;
}

#schematic {
    display: block;
    width: 100%;
    height: 100%;
    font-family: "Liberation Sans", Arial, sans-serif;
}

.watermark {
    position: absolute;
    right: 14px;
    bottom: 4px;
    font-family: "Noto Sans CJK SC", sans-serif;
    font-size: 20px;
    line-height: 30px;
    font-weight: 300;
    color: #8c8c86;
    text-shadow: 1px 1px 0 #f2f2ea;
}

/* schematic parts */
.grid {
    fill: #8f9084;
    shape-rendering: crispEdges;
}

.border {
    stroke: #8c86c8;
    stroke-width: 2;
}

.body {
    fill: #c8c8a8;
    stroke: #880c0c;
    stroke-width: 2;
}

.pin,
.wire,
.gen {
    fill: none;
    stroke-width: 1.5;
}

.pin {
    stroke: #880c0c;
}

.wire {
    stroke: #0c480c;
}

.gen {
    stroke: #2c2cb0;
}

.thin {
    stroke-width: 1;
}

.node {
    fill: #003c00;
}

.lv-r {
    fill: #ff4040;
}

.lv-b {
    fill: #4040ff;
}

.lv-g {
    fill: #808080;
}

.t {
    font-size: 8px;
    fill: #202020;
}

.ref {
    font-size: 12px;
    fill: #202020;
}

.end {
    text-anchor: end;
}

.dim {
    fill: #8a8a82;
}

.blue {
    fill: #2c2cb0;
}

.over {
    text-decoration: overline;
}

.case {
    fill: #848484;
    stroke: #880c0c;
    stroke-width: 1.5;
}

.glass {
    fill: #400000;
    stroke: #880c0c;
    stroke-width: 1.5;
}

.divider {
    stroke: #780000;
    stroke-width: 1.5;
}

.lit {
    fill: #ff0000;
    stroke: #ff0000;
    stroke-width: 0.7;
}

.unlit {
    fill: #600000;
    stroke: #600000;
    stroke-width: 0.7;
}

.seg {
    font-family: "DejaVu Sans", sans-serif;
    font-size: 10px;
    font-weight: bold;
    fill: #101010;
}

.cap,
.ring {
    fill: #c8c8a8;
    stroke: #880c0c;
    stroke-width: 1.5;
}

.ball {
    fill: #e00000;
    stroke: #700000;
    stroke-width: 1;
}

.mark {
    fill: none;
    stroke: #300000;
    stroke-width: 1;
}

.freq {
    font-size: 9px;
    font-weight: bold;
    fill: #880c0c;
}

.unit {
    font-size: 67px;
    font-weight: bold;
    fill: #800000;
}
```
